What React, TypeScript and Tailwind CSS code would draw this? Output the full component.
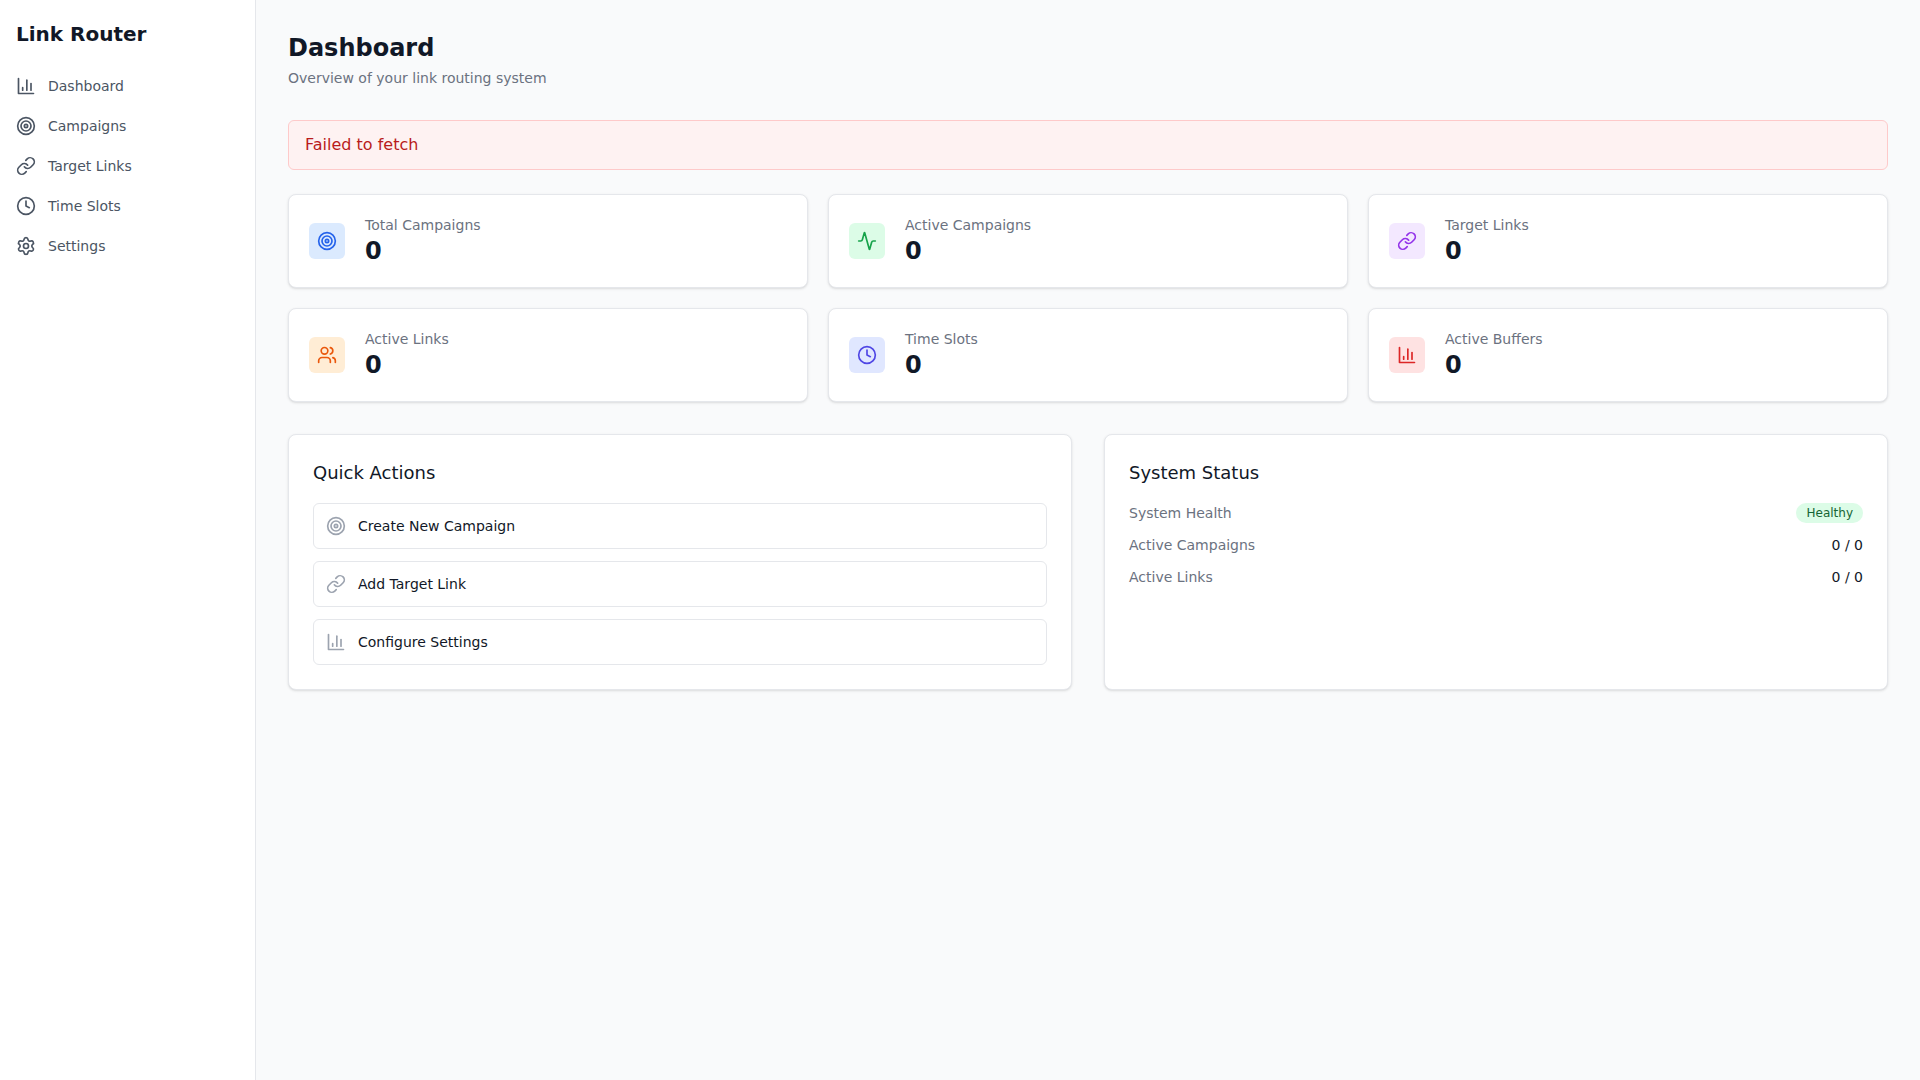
import { Target, Link, Clock, Settings, Activity, Users } from "lucide-react";

function BarChart({ className }: { className?: string }) {
  return (
    <svg
      xmlns="http://www.w3.org/2000/svg"
      viewBox="0 0 24 24"
      fill="none"
      stroke="currentColor"
      strokeWidth={2}
      strokeLinecap="round"
      strokeLinejoin="round"
      className={className}
    >
      <path d="M3 3v18h18" />
      <path d="M18 17V9" />
      <path d="M13 17V5" />
      <path d="M8 17v-3" />
    </svg>
  );
}

const nav = [
  { label: "Dashboard", Icon: BarChart },
  { label: "Campaigns", Icon: Target },
  { label: "Target Links", Icon: Link },
  { label: "Time Slots", Icon: Clock },
  { label: "Settings", Icon: Settings },
];

const stats = [
  { label: "Total Campaigns", Icon: Target, box: "bg-[#dbeafe]", color: "text-[#2563eb]" },
  { label: "Active Campaigns", Icon: Activity, box: "bg-[#dcfce7]", color: "text-[#16a34a]" },
  { label: "Target Links", Icon: Link, box: "bg-[#f3e8ff]", color: "text-[#9333ea]" },
  { label: "Active Links", Icon: Users, box: "bg-[#ffedd5]", color: "text-[#ea580c]" },
  { label: "Time Slots", Icon: Clock, box: "bg-[#e0e7ff]", color: "text-[#4f46e5]" },
  { label: "Active Buffers", Icon: BarChart, box: "bg-[#fee2e2]", color: "text-[#dc2626]" },
];

const actions = [
  { label: "Create New Campaign", Icon: Target },
  { label: "Add Target Link", Icon: Link },
  { label: "Configure Settings", Icon: BarChart },
];

const statusRows = [
  { label: "Active Campaigns", value: "0 / 0" },
  { label: "Active Links", value: "0 / 0" },
];

export default function App() {
  return (
    <div className="flex min-h-screen bg-[#f9fafb] font-['DejaVu_Sans',sans-serif]">
      <aside className="w-64 shrink-0 border-r border-[#e5e7eb] bg-white">
        <div className="px-4 pt-5 pb-[18px]">
          <h1 className="text-xl font-bold text-[#111827]">Link Router</h1>
        </div>
        <nav>
          {nav.map(({ label, Icon }) => (
            <a key={label} className="flex items-center gap-3 px-4 py-2.5 text-sm text-[#4b5563]">
              <Icon className="h-5 w-5" />
              <span>{label}</span>
            </a>
          ))}
        </nav>
      </aside>
      <main className="flex-1 p-8">
        <div className="mb-8">
          <h2 className="text-2xl font-bold text-[#111827]">Dashboard</h2>
          <p className="mt-1 text-sm text-[#6b7280]">Overview of your link routing system</p>
        </div>
        <div className="mb-6 rounded-md border border-[#fecaca] bg-[#fef2f2] px-4 py-3 text-[#b91c1c]">
          Failed to fetch
        </div>
        <div className="mb-8 grid grid-cols-3 gap-5">
          {stats.map(({ label, Icon, box, color }) => (
            <div key={label} className="flex items-center gap-5 rounded-lg border border-[#e5e7eb] bg-white p-5 shadow-sm">
              <div className={`rounded-md p-2 ${box}`}>
                <Icon className={`h-5 w-5 ${color}`} />
              </div>
              <div>
                <p className="text-sm text-[#6b7280]">{label}</p>
                <p className="text-2xl font-bold text-[#111827]">0</p>
              </div>
            </div>
          ))}
        </div>
        <div className="grid grid-cols-2 gap-8">
          <section className="rounded-lg border border-[#e5e7eb] bg-white p-6 shadow-sm">
            <h3 className="mb-4 text-lg font-medium text-[#111827]">Quick Actions</h3>
            <div className="flex flex-col gap-3">
              {actions.map(({ label, Icon }) => (
                <button key={label} className="flex items-center gap-3 rounded-md border border-[#e5e7eb] p-3 text-left text-sm text-[#111827]">
                  <Icon className="h-5 w-5 text-[#9ca3af]" />
                  <span>{label}</span>
                </button>
              ))}
            </div>
          </section>
          <section className="rounded-lg border border-[#e5e7eb] bg-white p-6 shadow-sm">
            <h3 className="mb-4 text-lg font-medium text-[#111827]">System Status</h3>
            <div className="flex flex-col gap-3">
              <div className="flex items-center justify-between">
                <span className="text-sm text-[#6b7280]">System Health</span>
                <span className="rounded-full bg-[#dcfce7] px-2.5 py-0.5 text-xs text-[#166534]">Healthy</span>
              </div>
              {statusRows.map(({ label, value }) => (
                <div key={label} className="flex items-center justify-between">
                  <span className="text-sm text-[#6b7280]">{label}</span>
                  <span className="text-sm text-[#111827]">{value}</span>
                </div>
              ))}
            </div>
          </section>
        </div>
      </main>
    </div>
  );
}
